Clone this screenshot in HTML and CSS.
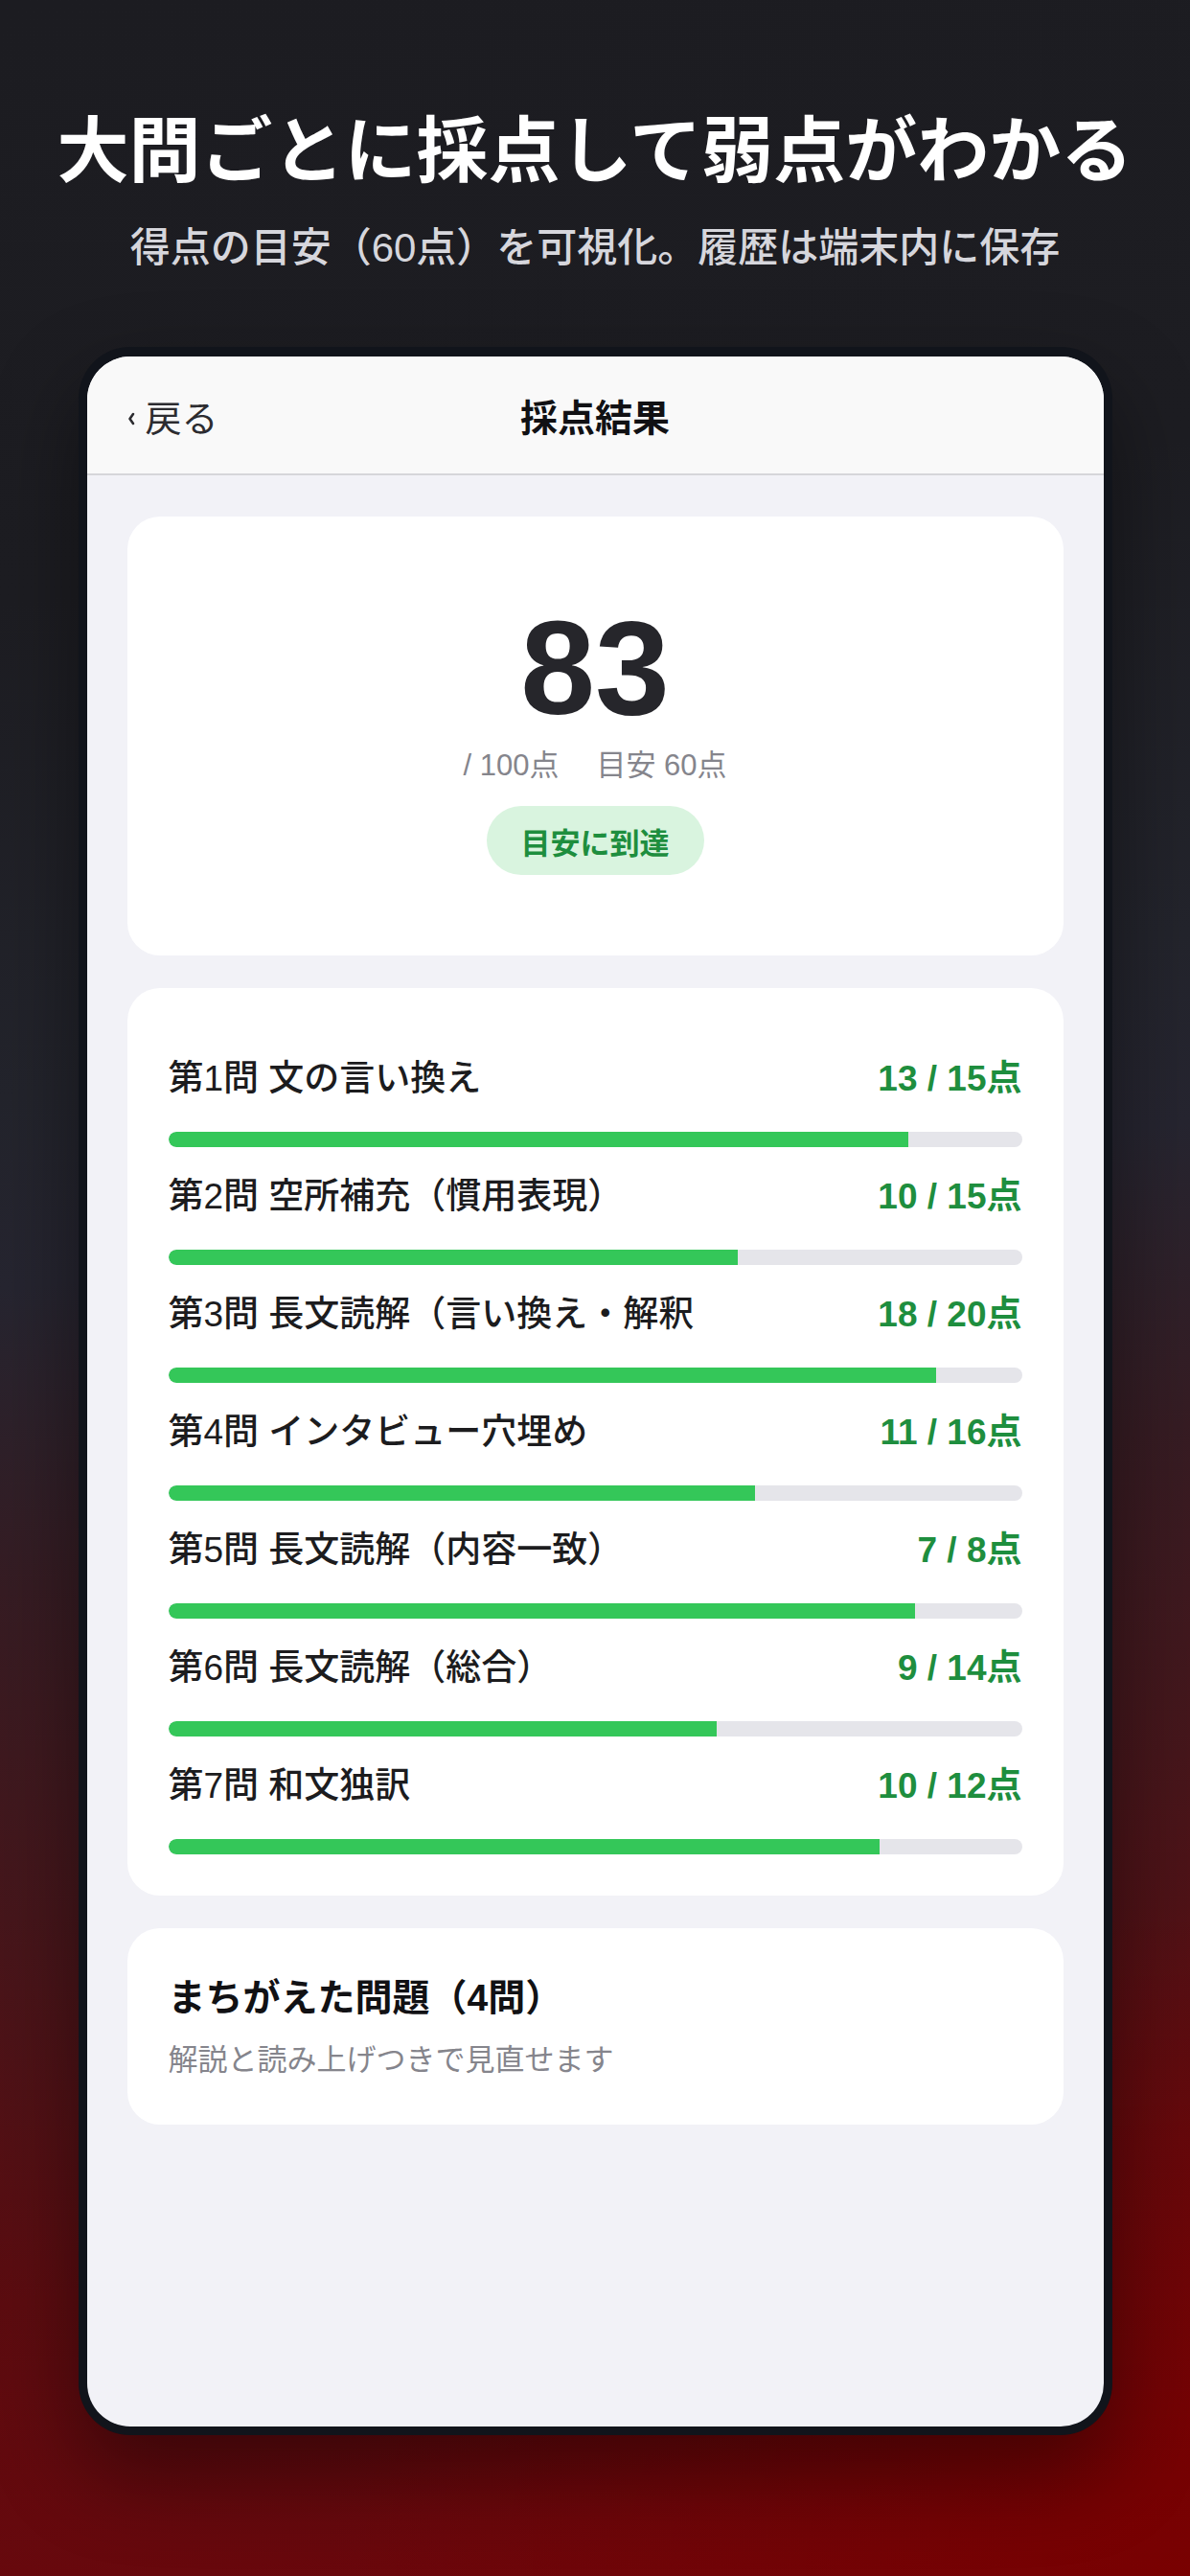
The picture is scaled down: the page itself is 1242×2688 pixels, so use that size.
FILE: index.html
```html
<!DOCTYPE html>
<html lang="ja">
<head>
<meta charset="utf-8">
<title>採点結果</title>
<link rel="stylesheet" href="styles.css">
</head>
<body>
<div class="page">
  <h1 class="headline">大問ごとに採点して弱点がわかる</h1>
  <p class="subline">得点の目安（60点）を可視化。履歴は端末内に保存</p>

  <div class="device">
    <div class="screen">
      <header class="nav">
        <div class="nav-back">
          <svg class="chev" width="8" height="14" viewBox="0 0 8 14" aria-hidden="true"><path d="M6 2 L2.5 7 L6 12" fill="none" stroke="#2c2c30" stroke-width="2.6" stroke-linecap="round" stroke-linejoin="round"/></svg>
          <span>戻る</span>
        </div>
        <div class="nav-title">採点結果</div>
        <div class="nav-spacer"></div>
      </header>

      <main class="content">
        <section class="card score-card">
          <div class="score-num">83</div>
          <div class="score-meta"><span>/ 100点</span><span>目安 60点</span></div>
          <div class="badge">目安に到達</div>
        </section>

        <section class="card parts-card">
          <div class="part">
            <div class="part-head"><span class="part-name">第1問 文の言い換え</span><span class="part-score">13 / 15点</span></div>
            <div class="bar"><div class="fill" style="width:86.67%"></div></div>
          </div>
          <div class="part">
            <div class="part-head"><span class="part-name">第2問 空所補充（慣用表現）</span><span class="part-score">10 / 15点</span></div>
            <div class="bar"><div class="fill" style="width:66.67%"></div></div>
          </div>
          <div class="part">
            <div class="part-head"><span class="part-name">第3問 長文読解（言い換え・解釈</span><span class="part-score">18 / 20点</span></div>
            <div class="bar"><div class="fill" style="width:90%"></div></div>
          </div>
          <div class="part">
            <div class="part-head"><span class="part-name">第4問 インタビュー穴埋め</span><span class="part-score">11 / 16点</span></div>
            <div class="bar"><div class="fill" style="width:68.75%"></div></div>
          </div>
          <div class="part">
            <div class="part-head"><span class="part-name">第5問 長文読解（内容一致）</span><span class="part-score">7 / 8点</span></div>
            <div class="bar"><div class="fill" style="width:87.5%"></div></div>
          </div>
          <div class="part">
            <div class="part-head"><span class="part-name">第6問 長文読解（総合）</span><span class="part-score">9 / 14点</span></div>
            <div class="bar"><div class="fill" style="width:64.29%"></div></div>
          </div>
          <div class="part">
            <div class="part-head"><span class="part-name">第7問 和文独訳</span><span class="part-score">10 / 12点</span></div>
            <div class="bar"><div class="fill" style="width:83.33%"></div></div>
          </div>
        </section>

        <section class="card miss-card">
          <h2 class="miss-title">まちがえた問題（4問）</h2>
          <p class="miss-sub">解説と読み上げつきで見直せます</p>
        </section>
      </main>
    </div>
  </div>
</div>
</body>
</html>
```

FILE: styles.css
```css
html, body {
  margin: 0;
  padding: 0;
}
body {
  width: 1242px;
  height: 2688px;
  overflow: hidden;
  font-family: "Liberation Sans", "Noto Sans CJK JP", sans-serif;
  background: #1c1c21;
}
.page {
  width: 1242px;
  height: 2688px;
  box-sizing: border-box;
  padding-top: 113px;
  display: flex;
  flex-direction: column;
  align-items: center;
  background:
    radial-gradient(ellipse 900px 700px at 100% 100%, rgba(122, 0, 0, 0.9) 0%, rgba(122, 0, 0, 0) 100%),
    linear-gradient(172deg, #1c1c21 0%, #1d1d22 22%, #23242c 40%, #262530 47%, #361c23 58%, #46161b 70%, #5c0c10 84%, #6e060b 100%);
}
.headline {
  margin: 0;
  font-size: 75px;
  line-height: 90px;
  font-weight: 700;
  color: #ffffff;
  letter-spacing: 0;
}
.subline {
  margin: 28px 0 0;
  font-size: 42px;
  line-height: 55px;
  font-weight: 500;
  color: #d6d6dc;
}
.device {
  margin-top: 76px;
  width: 1079px;
  box-sizing: border-box;
  padding: 10px 9px 9px 9px;
  background: #11141b;
  border-radius: 54px;
  box-shadow: 0 40px 90px rgba(0, 0, 0, 0.42);
}
.screen {
  height: 2160px;
  border-radius: 45px;
  overflow: hidden;
  background: #f2f2f7;
  display: flex;
  flex-direction: column;
}
.nav {
  height: 122px;
  flex: none;
  background: #f9f9f9;
  border-bottom: 2px solid #d6d6da;
  display: grid;
  grid-template-columns: 1fr auto 1fr;
  align-items: center;
  padding: 0 42px;
}
.nav-back {
  display: flex;
  align-items: center;
  gap: 11px;
  font-size: 38px;
  color: #2c2c30;
}
.chev {
  display: block;
  margin-top: 8px;
}
.nav-title {
  font-size: 39px;
  font-weight: 700;
  color: #111114;
}
.content {
  padding: 43px 42px;
  display: flex;
  flex-direction: column;
  gap: 34px;
}
.card {
  background: #ffffff;
  border-radius: 34px;
}
.score-card {
  padding: 88px 43px 84px;
  display: flex;
  flex-direction: column;
  align-items: center;
}
.score-num {
  font-size: 140px;
  line-height: 140px;
  font-weight: 700;
  color: #26262b;
}
.score-meta {
  margin-top: 12px;
  display: flex;
  gap: 39px;
  font-size: 31px;
  line-height: 40px;
  color: #85858c;
}
.badge {
  margin-top: 22px;
  height: 72px;
  padding: 0 36px;
  border-radius: 36px;
  background: #d9f4df;
  color: #1e8e3e;
  font-size: 31px;
  font-weight: 700;
  display: flex;
  align-items: center;
}
.parts-card {
  padding: 43px 43px 43px;
  display: flex;
  flex-direction: column;
}
.part {
  padding-top: 22px;
}
.part-head {
  display: flex;
  justify-content: space-between;
  align-items: center;
  height: 52px;
  font-size: 37px;
}
.part-name {
  color: #1c1c1e;
  font-weight: 500;
}
.part-score {
  color: #1e8e3e;
  font-weight: 700;
}
.bar {
  margin-top: 33px;
  height: 16px;
  border-radius: 8px;
  background: #e5e5ea;
  overflow: hidden;
}
.fill {
  height: 100%;
  background: #34c759;
  border-radius: 8px 0 0 8px;
}
.miss-card {
  padding: 43px 43px 46px;
}
.miss-title {
  margin: 0;
  font-size: 39px;
  line-height: 60px;
  font-weight: 700;
  color: #111114;
}
.miss-sub {
  margin: 14px 0 0;
  font-size: 31px;
  line-height: 42px;
  color: #85858c;
}
```
